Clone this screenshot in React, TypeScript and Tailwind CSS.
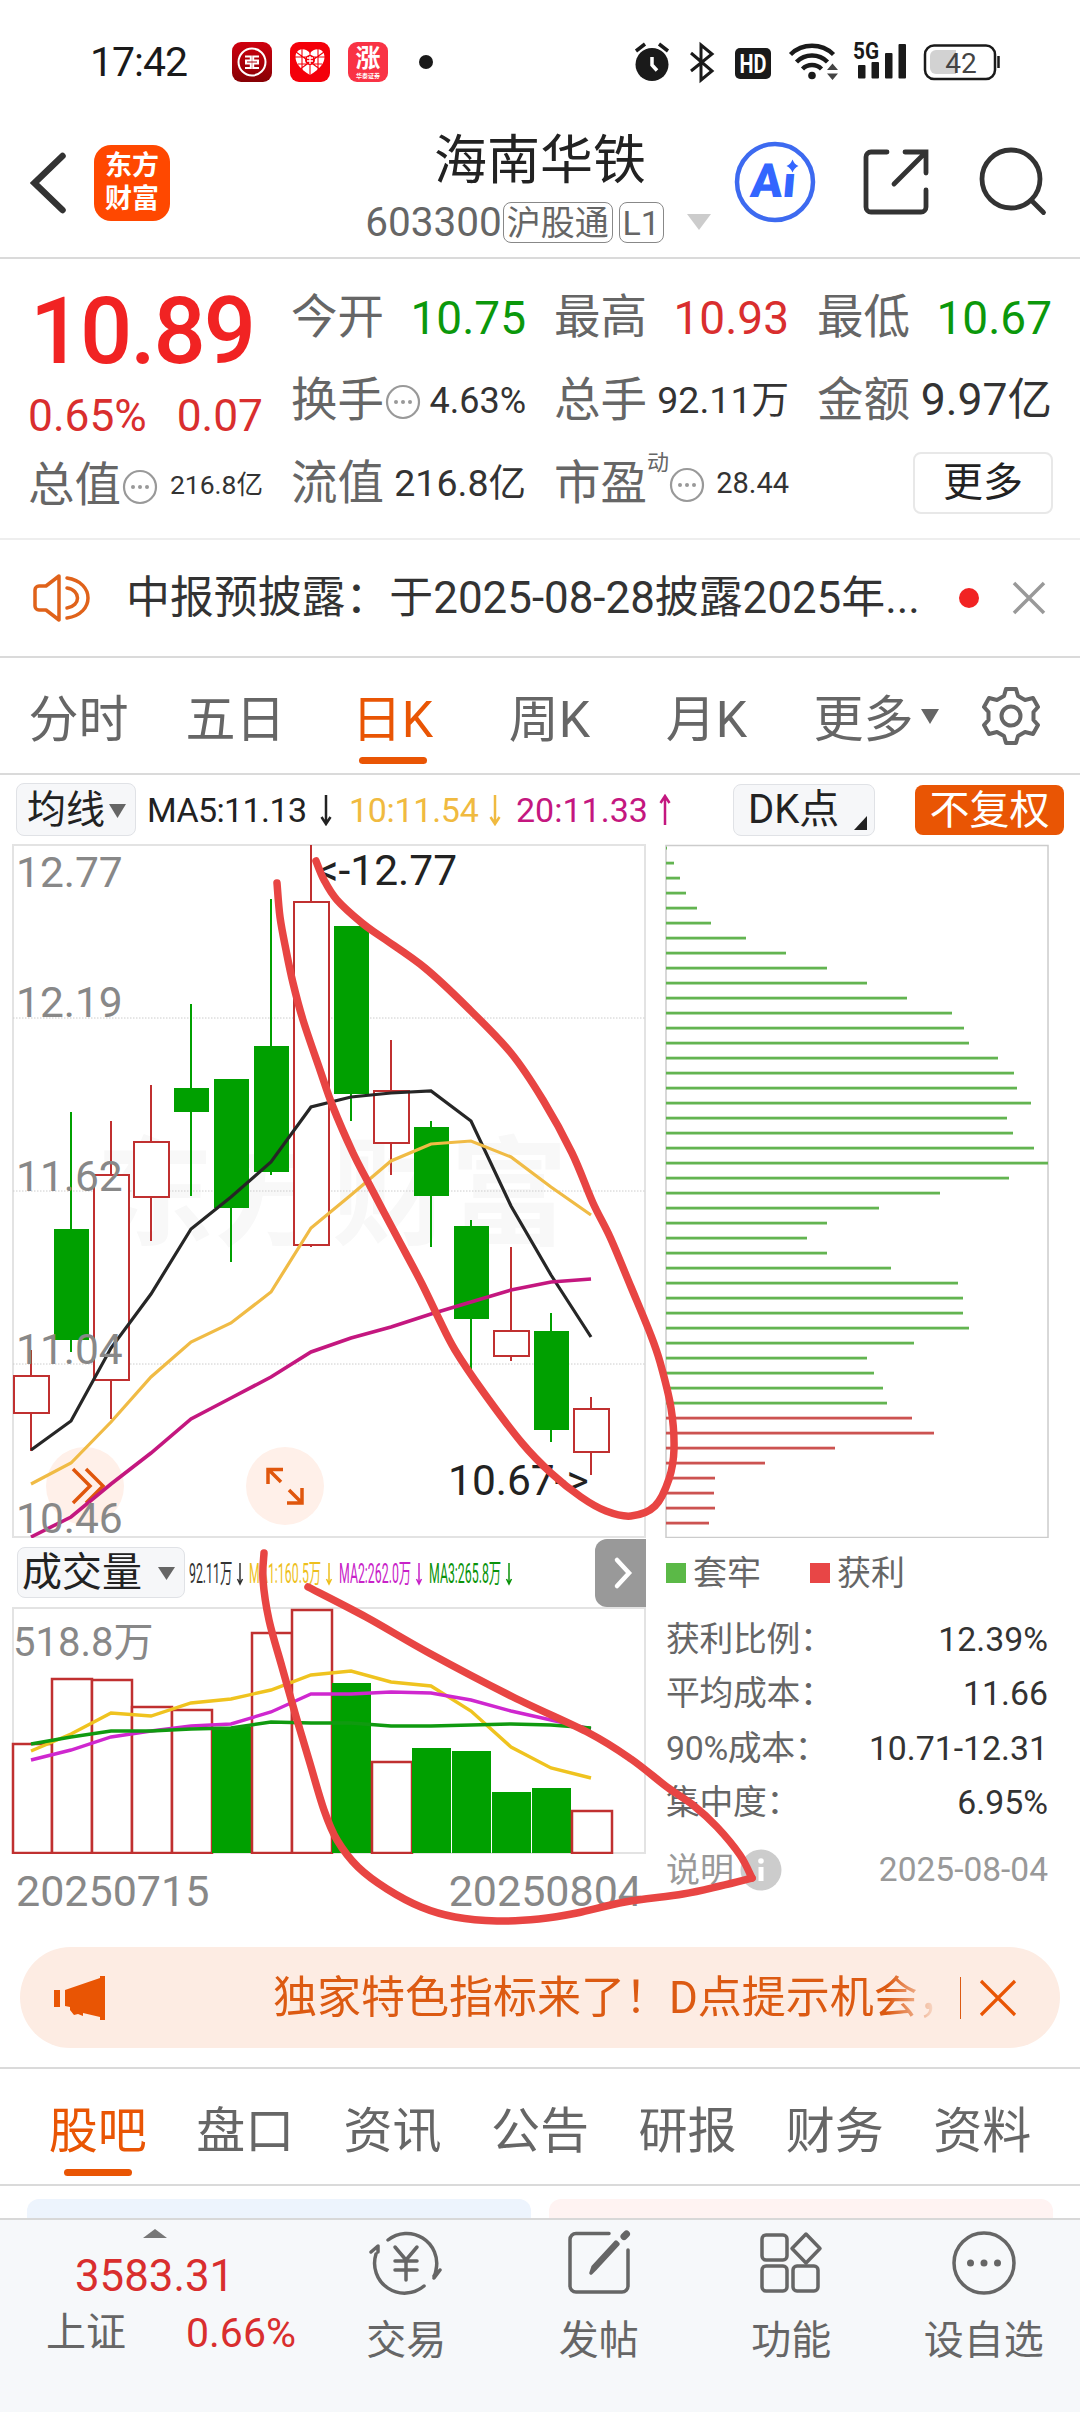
import React from 'react';
import clsx from 'clsx';

type Point = [number, number];

interface Candle {
  up: boolean;
  high: number;
  top: number;
  bottom: number;
  low: number;
}

const CANDLES: Candle[] = [
  { up: true, high: 1350, top: 1376, bottom: 1413, low: 1451 },
  { up: false, high: 1112, top: 1229, bottom: 1340, low: 1352 },
  { up: true, high: 1121, top: 1175, bottom: 1380, low: 1419 },
  { up: true, high: 1085, top: 1142, bottom: 1197, low: 1241 },
  { up: false, high: 1004, top: 1088, bottom: 1112, low: 1196 },
  { up: false, high: 1079, top: 1079, bottom: 1208, low: 1262 },
  { up: false, high: 899, top: 1046, bottom: 1172, low: 1175 },
  { up: true, high: 845, top: 902, bottom: 1245, low: 1247 },
  { up: false, high: 926, top: 926, bottom: 1094, low: 1121 },
  { up: true, high: 1040, top: 1091, bottom: 1143, low: 1175 },
  { up: false, high: 1121, top: 1127, bottom: 1196, low: 1247 },
  { up: false, high: 1220, top: 1226, bottom: 1319, low: 1373 },
  { up: true, high: 1247, top: 1331, bottom: 1356, low: 1361 },
  { up: false, high: 1313, top: 1331, bottom: 1430, low: 1442 },
  { up: true, high: 1397, top: 1409, bottom: 1452, low: 1475 },
];

const MA5 = [1450, 1421, 1348, 1294, 1229, 1197, 1162, 1107, 1097, 1093, 1091, 1121, 1206, 1275, 1337];
const MA10 = [1484, 1463, 1422, 1377, 1342, 1323, 1292, 1228, 1195, 1161, 1144, 1141, 1157, 1187, 1215];
const MA20 = [1537, 1517, 1484, 1453, 1419, 1398, 1377, 1352, 1338, 1327, 1314, 1302, 1290, 1282, 1279];

const VOLUMES = [1743, 1678, 1679, 1706, 1709, 1727, 1632, 1609, 1683, 1761, 1748, 1751, 1792, 1788, 1810];
const VOL_UP = [true, true, true, true, true, false, true, true, false, true, false, false, false, false, true];
const VMA1 = [1751, 1734, 1713, 1716, 1703, 1699, 1690, 1675, 1671, 1682, 1686, 1711, 1747, 1768, 1778];
const VMA2 = [1760, 1750, 1737, 1731, 1726, 1724, 1712, 1694, 1694, 1692, 1693, 1700, 1711, 1720, 1729];
const VMA3 = [1744, 1737, 1731, 1731, 1729, 1728, 1722, 1723, 1723, 1726, 1726, 1725, 1724, 1725, 1728];

const CHIPS = [
  1, 8, 14, 20, 31, 45, 80, 120, 161, 201, 241, 286, 298, 303, 332, 348, 351, 365, 341, 347, 368, 382, 343,
  274, 213, 161, 141, 161, 225, 292, 297, 297, 303, 248, 201, 208, 217, 221, 246, 268, 169, 99, 49, 48, 49, 43,
];
const FIRST_PROFIT_CHIP = 38;

const PEN_PRICE: Point[] = [
  [277, 883], [280, 917], [286, 950], [293, 983], [303, 1020], [320, 1070], [333, 1107], [353, 1153], [368, 1182],
  [396, 1235], [421, 1282], [438, 1317], [455, 1350], [484, 1393], [522, 1443], [551, 1473], [581, 1497],
  [606, 1511], [631, 1516], [655, 1506], [669, 1479], [674, 1449], [671, 1408], [660, 1362], [650, 1333],
  [631, 1287], [610, 1237], [593, 1203], [572, 1153], [543, 1100], [511, 1053], [467, 1007], [425, 968],
  [383, 938], [362, 923], [337, 900], [324, 880], [316, 861],
];

const PEN_VOLUME_LOWER: Point[] = [
  [264, 1553], [263, 1580], [269, 1620], [282, 1667], [295, 1713], [309, 1760], [324, 1810], [337, 1840],
  [358, 1867], [387, 1889], [421, 1907], [455, 1917], [497, 1921], [539, 1919], [577, 1913], [625, 1902],
  [683, 1894], [720, 1886], [752, 1878],
];

const PEN_VOLUME_UPPER: Point[] = [
  [752, 1878], [740, 1855], [717, 1827], [693, 1805], [667, 1787], [631, 1759], [589, 1733], [513, 1697],
  [429, 1653], [366, 1617], [308, 1587],
];

const PERIODS = ['分时', '五日', '日K', '周K', '月K', '更多'];
const INFO_TABS = ['股吧', '盘口', '资讯', '公告', '研报', '财务', '资料'];
const COST_ROWS = [
  { label: '获利比例：', value: '12.39%' },
  { label: '平均成本：', value: '11.66' },
  { label: '90%成本：', value: '10.71-12.31' },
  { label: '集中度：', value: '6.95%' },
];

const centerX = (i: number) => 31 + i * 40;
const linePoints = (ys: number[]) => ys.map((y, i) => `${centerX(i)},${y}`).join(' ');

// Catmull-Rom spline through the pen samples
function smoothPath(pts: Point[]) {
  let d = `M${pts[0][0]} ${pts[0][1]}`;
  for (let i = 0; i < pts.length - 1; i++) {
    const p0 = pts[i - 1] || pts[i];
    const p1 = pts[i];
    const p2 = pts[i + 1];
    const p3 = pts[i + 2] || p2;
    d += `C${p1[0] + (p2[0] - p0[0]) / 6} ${p1[1] + (p2[1] - p0[1]) / 6} ${p2[0] - (p3[0] - p1[0]) / 6} ${p2[1] - (p3[1] - p1[1]) / 6} ${p2[0]} ${p2[1]}`;
  }
  return d;
}

function StatusBar() {
  return (
    <div className="flex h-[110px] items-center pt-[14px] pl-[90px]">
      <span className="w-[142px] pt-px text-[41px] leading-none tracking-[-1px] text-[#1a1a1a]">17:42</span>
      <div className="flex gap-[18px]">
        <svg width="40" height="40" viewBox="0 0 40 40" fill="none" stroke="#fff">
          <defs>
            <linearGradient id="bank" x1="0" y1="0" x2="0" y2="1">
              <stop offset="0" stopColor="#d0000f" />
              <stop offset="1" stopColor="#860004" />
            </linearGradient>
          </defs>
          <rect width="40" height="40" rx="9" fill="url(#bank)" stroke="none" />
          <circle cx="20" cy="20" r="13.500" strokeWidth="2" />
          <path d="M13 14.500H18.800V18.500H14V21.500H18.800V26H13M27 14.500H21.200V18.500H26V21.500H21.200V26H27" strokeWidth="2" />
        </svg>
        <svg width="40" height="40" viewBox="0 0 40 40">
          <rect width="40" height="40" rx="9" fill="#f4000a" />
          <path d="M20 33C10 27 5.500 21 5.500 15c0-9 10-10 14.500-4 4.500-6 14.500-5 14.500 4 0 6-4.500 12-14.500 18z" fill="#fff" />
          <path d="M12 7v22M28 7v22M20 10v24M5 15h30M8 22h24M6 10l28 20M34 10L6 30" stroke="#f4000a" strokeWidth="1.100" />
          <circle cx="20" cy="18" r="5" fill="#f4000a" />
          <path d="M17 16h6M17 19h6M20 14v8" stroke="#fff" strokeWidth="1.300" />
        </svg>
        <div className="flex h-10 w-10 flex-col items-center rounded-[9px] bg-[#f93345] pt-[4px] text-white">
          <span className="text-[25px] font-bold leading-[26px]">涨</span>
          <span className="text-[6px] font-bold leading-[7px] whitespace-nowrap">华泰证券</span>
        </div>
      </div>
      <div className="ml-[31px] h-[14px] w-[14px] rounded-full bg-[#1a1a1a]" />
      <svg className="ml-[197px]" width="380" height="60" viewBox="630 32 380 60" fill="none">
        <circle cx="652" cy="64.500" r="16.500" fill="#1a1a1a" />
        <path d="M636 51l9-7M668 51l-9-7" stroke="#1a1a1a" strokeWidth="3.500" />
        <path d="M652 57v8l5 5.500" stroke="#fff" strokeWidth="3.500" />
        <path d="M691 53l21 18-11 9V45l11 9-21 17" stroke="#1a1a1a" strokeWidth="3" />
        <rect x="735" y="48" width="36" height="31" rx="5" fill="#1a1a1a" />
        <text x="753" y="73" textAnchor="middle" fontSize="25" fontWeight="700" fill="#fff" textLength="27" lengthAdjust="spacingAndGlyphs">HD</text>
        <g stroke="#1a1a1a" strokeWidth="4.500">
          <path d="M790.500 54.500a31 31 0 0 1 43 0" />
          <path d="M796.500 62a22 22 0 0 1 31 0" />
          <path d="M802.500 69a13.500 13.500 0 0 1 19 0" />
        </g>
        <circle cx="812" cy="75.500" r="3.800" fill="#1a1a1a" />
        <path d="M827 70l5.500-6.500 5.500 6.500zM827 73.500h11l-5.500 6.500z" fill="#444" />
        <text x="853" y="59" fontSize="23" fontWeight="700" fill="#1a1a1a" textLength="26" lengthAdjust="spacingAndGlyphs">5G</text>
        <g fill="#1a1a1a">
          <rect x="858" y="65" width="7.500" height="13.500" rx="1" />
          <rect x="871.500" y="62" width="7.500" height="16.500" rx="1" />
          <rect x="885" y="53" width="7.500" height="25.500" rx="1" />
          <rect x="898.500" y="44" width="7.500" height="34.500" rx="1" />
        </g>
        <rect x="925" y="45.500" width="70" height="33.500" rx="9" stroke="#1a1a1a" strokeWidth="2.500" />
        <path d="M936 50h20v24h-20a6 6 0 0 1-6-6V56a6 6 0 0 1 6-6z" fill="#d2d2d2" />
        <path d="M998.500 56v12" stroke="#1a1a1a" strokeWidth="2.500" />
        <text x="961" y="72.500" textAnchor="middle" fontSize="28" fill="#444">42</text>
      </svg>
    </div>
  );
}

function Header() {
  return (
    <header className="grid h-[149px] grid-cols-[360px_360px_360px] border-b-2 border-[#dadada]">
      <div className="flex items-start pt-[35px] pl-[30px]">
        <svg width="40" height="76" viewBox="0 0 40 76" fill="none">
          <path d="M32.500 11L4.500 38 32.500 65" stroke="#333" strokeWidth="6.500" strokeLinecap="round" />
        </svg>
        <div className="ml-6 flex h-[76px] w-[76px] flex-col items-center justify-center rounded-[17px] bg-[#ff4800] text-[27px] font-bold leading-[33px] text-white">
          <span>东方</span>
          <span>财富</span>
        </div>
      </div>
      <div className="flex flex-col items-center">
        <h1 className="mt-[25px] text-[53px] leading-[53px] text-[#222]">海南华铁</h1>
        <div className="mt-[13px] flex h-[42px] items-center pr-[3px] text-[#666]">
          <span className="text-[40.500px] leading-none">603300</span>
          <span className="ml-px rounded-lg border border-[#888] px-[3px] pt-[2px] text-[34px] leading-[37px]">沪股通</span>
          <span className="ml-[6px] w-[45px] rounded-lg border border-[#888] pt-[2px] text-center text-[34px] leading-[37px]">L1</span>
          <svg className="ml-[22px]" width="26" height="18" viewBox="0 0 26 18">
            <path d="M1 1h24L13 17z" fill="#ccc" />
          </svg>
        </div>
      </div>
      <div className="flex items-start pt-[30px] pl-[13px]">
        <svg width="84" height="84" viewBox="733 141 84 84">
          <circle cx="775" cy="183" r="38" fill="none" stroke="#3d6af0" strokeWidth="4.500" />
          <text x="750" y="198.500" fontSize="47" fontWeight="900" fill="#3366ff" transform="skewX(-5) translate(17 0)">Ai</text>
          <rect x="785" y="158" width="16" height="17" fill="#fff" />
          <path d="M792.500 160.500q2 5 6 6.500-4 1.500-6 6.500-2-5-6-6.500 4-1.500 6-6.500z" fill="#3366ff" />
        </svg>
        <svg className="ml-[45px]" width="68" height="84" viewBox="862 141 68 84" fill="none" stroke="#333" strokeWidth="4.800" strokeLinecap="round">
          <path d="M887 153H871a5 5 0 0 0-5 5V208a5 5 0 0 0 5 5H921a5 5 0 0 0 5-5V191M905 153H926V174M925 154L894 185" />
        </svg>
        <svg className="ml-12" width="70" height="84" viewBox="978 141 70 84" fill="none" stroke="#333" strokeWidth="4.800" strokeLinecap="round">
          <circle cx="1011" cy="180" r="29" />
          <path d="M1031.500 201.500l12 12" />
        </svg>
      </div>
    </header>
  );
}

function Dots() {
  return (
    <svg className="mt-[2px] ml-px shrink-0" width="36" height="36" viewBox="0 0 36 36">
      <circle cx="18" cy="18" r="16" fill="none" stroke="#999" strokeWidth="2.200" />
      <circle cx="11" cy="18" r="2" fill="#999" />
      <circle cx="18" cy="18" r="2" fill="#999" />
      <circle cx="25" cy="18" r="2" fill="#999" />
    </svg>
  );
}

interface StatProps {
  label: string;
  value: string;
  valueClass: string;
  dots?: boolean;
  sup?: string;
}

function Stat({ label, value, valueClass, dots, sup }: StatProps) {
  return (
    <div className="flex h-[83px] items-center justify-between pt-[2px] whitespace-nowrap">
      <div className="flex items-center text-[#666]">
        <span className="text-[46.500px] leading-none">{label}</span>
        {sup && <span className="mb-[42px] -mr-px text-[22px] leading-none">{sup}</span>}
        {dots && <Dots />}
      </div>
      <span className={clsx('leading-none', valueClass)}>{value}</span>
    </div>
  );
}

function Quote() {
  return (
    <section className="flex h-[281px] gap-[30px] border-b-2 border-[#eee] pt-4 pl-[28px]">
      <div className="w-[235px]">
        <div className="flex h-[112px] items-center pt-px pl-[2px] text-[92px] font-medium leading-none tracking-[-2.200px] text-[#f12323]">10.89</div>
        <div className="flex h-14 items-center justify-between pt-[2px] text-[44.300px] leading-none text-[#d92e2e]">
          <span>0.65%</span>
          <span>0.07</span>
        </div>
        <Stat label="总值" value="216.8亿" valueClass="text-[26.500px] text-[#333]" dots />
      </div>
      <div className="-ml-[2px] w-[235px]">
        <Stat label="今开" value="10.75" valueClass="text-[46px] text-[#0b980b]" />
        <Stat label="换手" value="4.63%" valueClass="text-[36px] text-[#333]" dots />
        <Stat label="流值" value="216.8亿" valueClass="text-[37.500px] text-[#333]" />
      </div>
      <div className="-ml-[2px] w-[235px]">
        <Stat label="最高" value="10.93" valueClass="text-[46px] text-[#d92e2e]" />
        <Stat label="总手" value="92.11万" valueClass="text-[37.500px] text-[#333]" />
        <Stat label="市盈" value="28.44" valueClass="text-[29px] text-[#333]" sup="动" dots />
      </div>
      <div className="-ml-[2px] w-[235px]">
        <Stat label="最低" value="10.67" valueClass="text-[46px] text-[#0b980b]" />
        <Stat label="金额" value="9.97亿" valueClass="text-[44.500px] text-[#333]" />
        <div className="flex h-[83px] items-center justify-end">
          <button className="-mr-px h-[62px] w-[140px] rounded-lg border-2 border-[#e8e8e8] pt-px text-[40px] leading-none text-[#222]">更多</button>
        </div>
      </div>
    </section>
  );
}

function Notice() {
  return (
    <section className="flex h-[118px] items-center border-b-2 border-[#dadada] pl-8">
      <svg width="62" height="52" viewBox="0 0 62 52" fill="none" stroke="#e0621a" strokeWidth="3.500" strokeLinecap="round" strokeLinejoin="round">
        <path d="M27 4L14 14H7a4 4 0 0 0-4 4V34a4 4 0 0 0 4 4H14L27 48z" />
        <path d="M35 6c28 4 28 36 0 40M35 16c14 2 14 18 0 20" />
      </svg>
      <p className="ml-[32px] w-[797px] pt-[2px] text-[43.900px] leading-none whitespace-nowrap text-[#333]">中报预披露：于2025-08-28披露2025年...</p>
      <div className="ml-[36px] h-5 w-5 rounded-full bg-[#f12323]" />
      <svg className="ml-[33px]" width="34" height="34" viewBox="0 0 34 34">
        <path d="M2 2l30 30M32 2L2 32" stroke="#999" strokeWidth="3.500" />
      </svg>
    </section>
  );
}

function PeriodTabs() {
  return (
    <nav className="flex h-[117px] border-b-2 border-[#dadada]">
      {PERIODS.map((name, i) => (
        <div key={name} className={clsx('flex w-[157px] flex-col items-center pt-[37px] text-[50px] leading-[50px]', i === 2 ? 'text-[#e95504]' : 'text-[#666]')}>
          <span className="relative">
            {name}
            {name === '更多' && (
              <svg className="absolute top-[14px] left-[107px]" width="18" height="15" viewBox="0 0 18 15">
                <path d="M0 0h18L9 15z" fill="#666" />
              </svg>
            )}
          </span>
          {i === 2 && <div className="mt-[12px] h-[7px] w-[68px] rounded-full bg-[#e95504]" />}
        </div>
      ))}
      <svg className="mt-7 ml-[39px]" width="60" height="60" viewBox="0 0 60 60" fill="none" stroke="#666" strokeWidth="4" strokeLinejoin="round">
        <path d="M25 3h10l2 7 7 4 8-2 5 9-4.500 5v8l4.500 5-5 9-8-2-7 4-2 7H25l-2-7-7-4-8 2-5-9 4.500-5v-8L3 21l5-9 8 2 7-4z" />
        <circle cx="30" cy="30" r="9.500" />
      </svg>
    </nav>
  );
}

function Arrow({ up }: { up?: boolean }) {
  return (
    <svg width="12" height="32" viewBox="0 0 12 32" fill="none" stroke="currentColor" strokeWidth="2.500">
      {up ? <path d="M6 31V3M1.500 9L6 2l4.500 7" /> : <path d="M6 1v28M1.500 23L6 30l4.500-7" />}
    </svg>
  );
}

function AverageBar() {
  return (
    <div className="flex h-[69px] items-center pl-4 text-[34px] leading-none whitespace-nowrap">
      <div className="flex h-[53px] w-[120px] items-center rounded-lg border border-[#e0e2e6] bg-[#f6f7f9] pt-[2px] pl-[10px] text-[39px] text-[#222]">
        均线
        <svg className="ml-[4px]" width="17" height="14" viewBox="0 0 17 14">
          <path d="M0 0h17L8.500 14z" fill="#666" />
        </svg>
      </div>
      <div className="ml-[11px] flex w-[202px] items-center gap-[13px] text-[#222]">
        <span className="tracking-[-0.600px]">MA5:11.13</span>
        <Arrow />
      </div>
      <div className="flex w-[167px] items-center gap-[11px] text-[#f0ba40]">
        <span className="tracking-[-0.300px]">10:11.54</span>
        <Arrow />
      </div>
      <div className="flex w-[156px] items-center gap-[11px] text-[#c4177f]">
        <span>20:11.33</span>
        <Arrow up />
      </div>
      <div className="ml-[61px] flex h-[52px] w-[142px] items-end rounded-lg border border-[#e0e2e6] bg-[#f6f7f9] pb-[5px] pl-[14px] text-[40px] text-[#222]">
        DK点
        <svg className="ml-[15px]" width="13" height="14" viewBox="0 0 13 14">
          <path d="M13 0v14H0z" fill="#222" />
        </svg>
      </div>
      <div className="ml-[40px] flex h-[50px] w-[149px] items-center justify-center rounded-lg bg-[#e95504] pt-[2px] text-[40px] text-white">不复权</div>
    </div>
  );
}

function PriceChart() {
  return (
    <svg className="block" width="660" height="694" viewBox="0 844 660 694">
      <text x="96" y="1236" fontSize="118" fontWeight="700" fill="#f8f8f8">东方财富</text>
      <rect x="13" y="845" width="632" height="692" fill="none" stroke="#e3e3e3" strokeWidth="2" />
      {[1018, 1191, 1364].map(y => (
        <line key={y} x1="13" x2="645" y1={y} y2={y} stroke="#ccc" strokeDasharray="1.500 1.500" />
      ))}
      <circle cx="85" cy="1486" r="39" fill="#fff0e9" />
      <circle cx="285" cy="1486" r="39" fill="#fff0e9" />
      <g fill="none" stroke="#e0560c" strokeWidth="3.500">
        <path d="M73 1469l17 17-17 17M86 1469l17 17-17 17" />
        <path d="M283 1469.500H268V1484M269 1470l12 12M287 1503H302V1488M301 1502l-12-12" />
      </g>
      {CANDLES.map((c, i) => {
        const x = centerX(i);
        if (!c.up) {
          return (
            <g key={i} fill="#00a000">
              <rect x={x - 1} y={c.high} width="2" height={c.low - c.high} />
              <rect x={x - 17} y={c.top} width="35" height={c.bottom - c.top} />
            </g>
          );
        }
        return (
          <g key={i} stroke="#c03030" strokeWidth="2">
            <line x1={x} x2={x} y1={c.high} y2={c.low} />
            <rect x={x - 17} y={c.top} width="35" height={c.bottom - c.top} fill="#fff" />
          </g>
        );
      })}
      <g fill="none" strokeWidth="3.200">
        <polyline points={linePoints(MA5)} stroke="#262626" />
        <polyline points={linePoints(MA10)} stroke="#f0bb45" />
        <polyline points={linePoints(MA20)} stroke="#c4177f" strokeWidth="3.600" />
      </g>
      <g fontSize="42.500" fill="#888">
        <text x="16" y="887">12.77</text>
        <text x="16" y="1017">12.19</text>
        <text x="16" y="1191">11.62</text>
        <text x="16" y="1364">11.04</text>
        <text x="16" y="1533">10.46</text>
      </g>
      <g fontSize="42.500" fill="#222">
        <text x="317" y="885">&lt;-12.77</text>
        <text x="448" y="1495">10.67-&gt;</text>
      </g>
    </svg>
  );
}

const VOLUME_LABELS = [
  { text: '92.11万', x: 189, width: 43, color: '#333' },
  { text: 'MA1:160.5万', x: 249, width: 72, color: '#eebf1c' },
  { text: 'MA2:262.0万', x: 339, width: 72, color: '#c822c8' },
  { text: 'MA3:265.8万', x: 429, width: 72, color: '#0a930a' },
];

function VolumeBar() {
  return (
    <div className="flex h-[69px] items-center pl-[17px]">
      <div className="flex h-[51px] w-[168px] items-center rounded-lg border border-[#e0e2e6] bg-[#f6f7f9] pt-px pl-[4px] text-[40px] leading-none text-[#222]">
        成交量
        <svg className="ml-[16px]" width="17" height="13" viewBox="0 0 17 13">
          <path d="M0 0h17L8.500 13z" fill="#666" />
        </svg>
      </div>
      <svg width="410" height="40" viewBox="185 1553 410 40" fill="none" fontSize="27">
        {VOLUME_LABELS.map(l => (
          <g key={l.text}>
            <text transform={`translate(${l.x} 1582.500) scale(0.457 1)`} fill={l.color}>{l.text}</text>
            <path d={`M${l.x + l.width + 8} 1563v20m-2.500-4l2.500 5 2.500-5`} stroke={l.color} strokeWidth="1.500" />
          </g>
        ))}
      </svg>
      <div className="flex h-[68px] w-[51px] items-center rounded-l-[12px] bg-[#999] pl-[18px]">
        <svg width="20" height="34" viewBox="0 0 20 34" fill="none">
          <path d="M4 4l12 13L4 30" stroke="#fff" strokeWidth="4.500" strokeLinecap="round" />
        </svg>
      </div>
    </div>
  );
}

function VolumeChart() {
  return (
    <svg className="block" width="660" height="247" viewBox="0 1607 660 247">
      <rect x="13" y="1608" width="632" height="245" fill="none" stroke="#e3e3e3" strokeWidth="2" />
      {VOLUMES.map((top, i) =>
        VOL_UP[i] ? (
          <rect key={i} x={i === 0 ? 13 : 12 + i * 40} y={top + 1} width={i === 0 ? 39 : 40} height={1852 - top} fill="#fff" stroke="#c03030" strokeWidth="2.500" />
        ) : (
          <rect key={i} x={12 + i * 40} y={top} width="39" height={1853 - top} fill="#00a000" />
        ),
      )}
      <g fill="none" strokeWidth="3.400">
        <polyline points={linePoints(VMA1)} stroke="#efc31f" />
        <polyline points={linePoints(VMA2)} stroke="#cf27cf" />
        <polyline points={linePoints(VMA3)} stroke="#109a10" />
      </g>
      <text x="13" y="1656" fontSize="40" fill="#888">518.8万</text>
    </svg>
  );
}

function ChipPanel() {
  return (
    <div className="w-[384px] pl-[5px] text-[34px] leading-none text-[#666]">
      <svg className="block" width="384" height="694" viewBox="665 844 384 694">
        <rect x="666" y="845.500" width="382" height="692" fill="none" stroke="#ccc" strokeWidth="1.500" />
        {CHIPS.map((w, i) => (
          <rect key={i} x="666" y={846.700 + i * 15} width={w} height="2.800" fill={i < FIRST_PROFIT_CHIP ? '#63b451' : '#cc5351'} />
        ))}
      </svg>
      <div className="flex h-[70px] items-center">
        <div className="ml-px h-5 w-5 bg-[#5bb947]" />
        <span className="ml-[7px]">套牢</span>
        <div className="ml-[49px] h-5 w-5 bg-[#e84646]" />
        <span className="ml-[7px]">获利</span>
      </div>
      <div className="mt-[5px] w-[383px]">
        {COST_ROWS.map(row => (
          <div key={row.label} className="flex h-[54.200px] items-center justify-between pl-px">
            <span className="text-[33.800px] tracking-[-0.300px]">{row.label}</span>
            <span className="text-[33.800px] text-[#333]">{row.value}</span>
          </div>
        ))}
        <div className="mt-[20px] flex h-[40px] items-center pl-px text-[#999]">
          <span>说明</span>
          <svg className="ml-[6px]" width="42" height="42" viewBox="0 0 42 42">
            <circle cx="21" cy="21" r="20.500" fill="#ccc" />
            <circle cx="21" cy="12" r="2.800" fill="#fff" />
            <path d="M21 18v14" stroke="#fff" strokeWidth="5" />
          </svg>
          <span className="ml-auto text-[33.500px]">2025-08-04</span>
        </div>
      </div>
    </div>
  );
}

function Charts() {
  return (
    <section className="relative flex h-[1103px]">
      <div className="w-[660px] shrink-0">
        <PriceChart />
        <VolumeBar />
        <VolumeChart />
        <div className="mt-[16px] flex justify-between pr-[18px] pl-[16px] text-[43px] leading-[43px] text-[#888]">
          <span>20250715</span>
          <span>20250804</span>
        </div>
      </div>
      <ChipPanel />
      {/* Hand-drawn markup over both charts */}
      <svg className="absolute top-0 left-0" width="1080" height="1103" viewBox="0 844 1080 1103" fill="none" stroke="#e84543" strokeWidth="7.500" strokeLinecap="round" strokeLinejoin="round">
        <path d={smoothPath(PEN_PRICE)} />
        <path d={smoothPath(PEN_VOLUME_LOWER)} />
        <path d={smoothPath(PEN_VOLUME_UPPER)} />
      </svg>
    </section>
  );
}

function Banner() {
  return (
    <div className="mx-5 flex h-[101px] items-center rounded-full bg-[#fdece3] pl-[33px]">
      <svg width="54" height="46" viewBox="0 0 54 46" fill="#e95504">
        <path d="M1 15h6v17H1zM12 15L47 3V1h5v44h-5v-3l-17-4v3l-5-2-4 1-4-5v-3l-5-1z" />
      </svg>
      <div className="ml-[166px] w-[668px] overflow-hidden pt-px text-[44px] leading-[56px] whitespace-nowrap text-[#dc5a12] [mask-image:linear-gradient(to_right,#000_92%,transparent)]">
        独家特色指标来了！D点提示机会，
      </div>
      <div className="ml-[19px] h-[42px] w-px bg-[#dc5a12]" />
      <svg className="ml-[18px]" width="38" height="38" viewBox="0 0 38 38">
        <path d="M2 2l34 34M36 2L2 36" stroke="#e95504" strokeWidth="3.200" />
      </svg>
    </div>
  );
}

function InfoTabs() {
  return (
    <nav className="mt-[19px] flex h-[119px] border-y-2 border-[#dadada] px-6">
      {INFO_TABS.map((name, i) => (
        <div key={name} className={clsx('flex flex-1 flex-col items-center pt-[38px] text-[49px] leading-[50px]', i === 0 ? 'text-[#e95504]' : 'text-[#666]')}>
          {name}
          {i === 0 && <div className="mt-[12px] h-[7px] w-[68px] rounded-full bg-[#e95504]" />}
        </div>
      ))}
    </nav>
  );
}

function NavItem({ label, children }: { label: string; children: React.ReactNode }) {
  return (
    <div className="flex flex-1 flex-col items-center">
      <svg className="mt-[8px]" width="76" height="70" viewBox="0 0 76 70" fill="none" stroke="#666" strokeWidth="3.500" strokeLinecap="round" strokeLinejoin="round">
        {children}
      </svg>
      <span className="mt-[23px] text-[40px] leading-none text-[#666]">{label}</span>
    </div>
  );
}

function BottomNav() {
  return (
    <footer className="flex h-[194px] border-t-2 border-[#d8d8d8] bg-[#f6f8fa]">
      <div className="w-[310px] text-[43.800px] leading-none text-[#d92e2e]">
        <svg className="mt-[9px] ml-[143px]" width="24" height="9" viewBox="0 0 24 9">
          <path d="M0 9L12 0l12 9z" fill="#777" />
        </svg>
        <div className="mt-[17px] ml-[75px]">3583.31</div>
        <div className="mt-[14px] flex items-center pl-[46px] text-[41px]">
          <span className="text-[40px] text-[#666]">上证</span>
          <span className="ml-[60px]">0.66%</span>
        </div>
      </div>
      <NavItem label="交易">
        <path d="M20 12A30 30 0 0 1 68 42q-.500 4-2 6M66 50l6-8M56 58A30 30 0 0 1 8 26M3 24L10 18V24" />
        <path d="M27 19l11 13 11-13M38 32V52M27 33h22M27 42h22" />
      </NavItem>
      <NavItem label="发帖">
        <path d="M48 5.500H15a6 6 0 0 0-6 6V58a6 6 0 0 0 6 6H61a6 6 0 0 0 6-6V22" />
        <path d="M57 16L34 41l-4 4 2-6 23-25z" fill="#666" />
        <path d="M63 8.500l2.500-2.500" strokeWidth="7" />
      </NavItem>
      <NavItem label="功能">
        <rect x="9" y="7" width="25" height="25" rx="4" />
        <rect x="9" y="38" width="25" height="25" rx="4" />
        <rect x="40" y="38" width="25" height="25" rx="4" />
        <path d="M53 6L67 20.500 53 35 39 20.500z" />
      </NavItem>
      <NavItem label="设自选">
        <circle cx="38" cy="35" r="30" />
        <g fill="#666" stroke="none">
          <circle cx="24.500" cy="35" r="3.500" />
          <circle cx="38" cy="35" r="3.500" />
          <circle cx="51.500" cy="35" r="3.500" />
        </g>
      </NavItem>
    </footer>
  );
}

export default function App() {
  return (
    <div className="flex h-[2412px] w-[1080px] flex-col overflow-hidden bg-white font-['Roboto','Noto_Sans_CJK_SC',sans-serif]">
      <StatusBar />
      <Header />
      <Quote />
      <Notice />
      <PeriodTabs />
      <AverageBar />
      <Charts />
      <Banner />
      <InfoTabs />
      <div className="flex h-[32px] gap-[18px] overflow-hidden px-[27px] pt-[13px]">
        <div className="h-10 flex-1 rounded-t-xl bg-[#edf4fd]" />
        <div className="h-10 flex-1 rounded-t-xl bg-[#fff3f2]" />
      </div>
      <BottomNav />
    </div>
  );
}
